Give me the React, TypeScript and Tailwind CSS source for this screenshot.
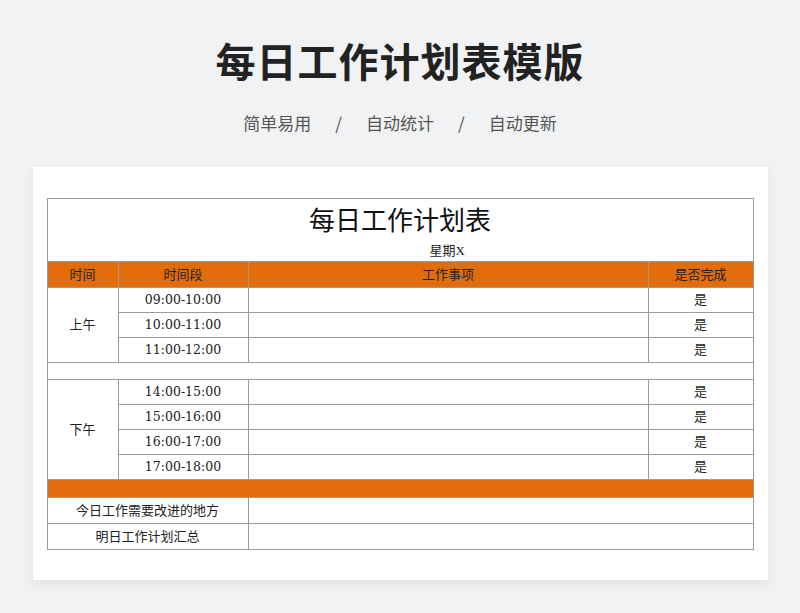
export default function App() {
  const f = { fontFamily: '"Liberation Serif","Noto Sans CJK SC",serif' };
  const td = "border border-[#9a9a9a] text-center text-[13px] text-[#222] p-0";
  const tm = { fontFamily: '"DejaVu Serif",serif', fontSize: "12.5px" };
  const am = ["09:00-10:00", "10:00-11:00", "11:00-12:00"];
  const pm = ["14:00-15:00", "15:00-16:00", "16:00-17:00", "17:00-18:00"];
  return (
    <div className="w-[800px] h-[613px] bg-[#f1f2f4] flex flex-col items-center" style={{ fontFamily: '"Noto Sans CJK SC",sans-serif' }}>
      <div className="mt-[30px] h-[60px] text-[40px] font-bold text-[#222] leading-[60px] tracking-[1px]">每日工作计划表模版</div>
      <div className="mt-[20px] text-[17px] text-[#555] leading-[26px] flex gap-[24px]">
        <span>简单易用</span><span>/</span><span>自动统计</span><span>/</span><span>自动更新</span>
      </div>
      <div className="mt-[31px] w-[735px] h-[413px] bg-white shadow-[0_4px_12px_rgba(0,0,0,0.08)] pt-[31px] pl-[14px]">
        <table className="border-collapse w-[706px] table-fixed" style={f}>
          <colgroup><col className="w-[71px]" /><col className="w-[130px]" /><col className="w-[400px]" /><col className="w-[105px]" /></colgroup>
          <tbody>
            <tr className="h-[63px]">
              <td colSpan={4} className="border border-[#9a9a9a] p-0 align-top">
                <div className="text-[26px] text-[#111] text-center leading-[30px] mt-[8px]">每日工作计划表</div>
                <div className="text-[13px] text-[#222] leading-[16px] mt-[6px] pl-[382px]">星期X</div>
              </td>
            </tr>
            <tr className="h-[26px] bg-[#e36c0a]">
              {["时间", "时间段", "工作事项", "是否完成"].map(t => <td key={t} className={td + " text-[#3a1a00]"}>{t}</td>)}
            </tr>
            {am.map((t, i) => (
              <tr key={t} className="h-[25px]">
                {i === 0 && <td rowSpan={3} className={td}>上午</td>}
                <td className={td} style={tm}>{t}</td><td className={td}></td><td className={td}>是</td>
              </tr>
            ))}
            <tr className="h-[17px]"><td colSpan={4} className={td}></td></tr>
            {pm.map((t, i) => (
              <tr key={t} className="h-[25px]">
                {i === 0 && <td rowSpan={4} className={td}>下午</td>}
                <td className={td} style={tm}>{t}</td><td className={td}></td><td className={td}>是</td>
              </tr>
            ))}
            <tr className="h-[18px] bg-[#e36c0a]"><td colSpan={4} className={td}></td></tr>
            <tr className="h-[26px]"><td colSpan={2} className={td}>今日工作需要改进的地方</td><td colSpan={2} className={td}></td></tr>
            <tr className="h-[26px]"><td colSpan={2} className={td}>明日工作计划汇总</td><td colSpan={2} className={td}></td></tr>
          </tbody>
        </table>
      </div>
    </div>
  );
}
